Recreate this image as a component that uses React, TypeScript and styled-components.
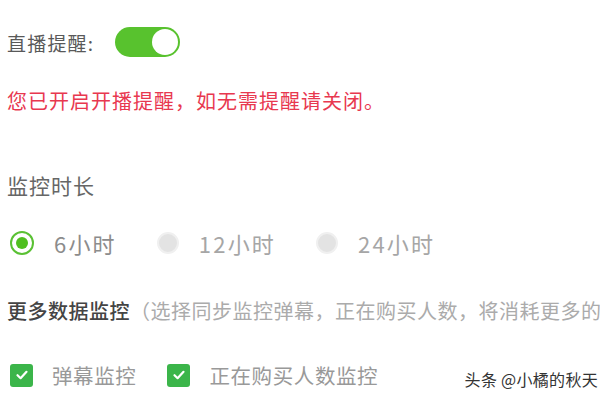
import React from 'react'
import styled, { createGlobalStyle } from 'styled-components'

const GlobalStyle = createGlobalStyle`
  html, body {
    margin: 0;
    padding: 0;
    background: #fff;
  }
  body {
    font-family: "Noto Sans CJK SC", "Noto Sans", sans-serif;
  }
`

const Page = styled.div`
  position: relative;
  width: 600px;
  height: 400px;
  overflow: hidden;
  padding-left: 7px;
  box-sizing: border-box;
  display: flex;
  flex-direction: column;
`

const Row = styled.div<{ $h: number; $mt?: number }>`
  display: flex;
  align-items: center;
  height: ${p => p.$h}px;
  margin-top: ${p => p.$mt || 0}px;
  white-space: nowrap;
`

const Text = styled.span<{ $color?: string; $weight?: number; $size?: number; $ls?: number }>`
  font-size: ${p => p.$size || 19}px;
  letter-spacing: ${p => (p.$ls ?? 1.2)}px;
  color: ${p => p.$color || '#595959'};
  font-weight: ${p => p.$weight || 400};
`

const Switch = styled.div`
  width: 65px;
  height: 30px;
  border-radius: 15px;
  background: #58c22e;
  margin-left: 21px;
  display: flex;
  align-items: center;
  justify-content: flex-end;
  padding: 0 2px;
  box-sizing: border-box;
`

const Knob = styled.div`
  width: 26px;
  height: 26px;
  border-radius: 50%;
  background: #fff;
`

const RadioGroup = styled.div`
  display: flex;
  align-items: center;
  gap: 40px;
  margin-left: 3px;
`

const RadioItem = styled.div`
  display: flex;
  align-items: center;
  gap: 20px;
`

const Radio = styled.span<{ $checked?: boolean }>`
  width: ${p => (p.$checked ? 24 : 22)}px;
  height: ${p => (p.$checked ? 24 : 22)}px;
  border-radius: 50%;
  box-sizing: border-box;
  display: flex;
  align-items: center;
  justify-content: center;
  border: 2px solid ${p => (p.$checked ? '#5ac134' : '#f0f0f0')};
  background: ${p => (p.$checked ? '#fff' : '#e3e3e3')};
  &::after {
    content: '';
    display: ${p => (p.$checked ? 'block' : 'none')};
    width: 12px;
    height: 12px;
    border-radius: 50%;
    background: #4fbf1f;
  }
`

const CheckGroup = styled.div`
  display: flex;
  align-items: center;
  gap: 31px;
  margin-left: 3px;
`

const CheckItem = styled.div`
  display: flex;
  align-items: center;
  gap: 19px;
`

const Checkbox = styled.span`
  width: 23px;
  height: 23px;
  border-radius: 3px;
  background: #3bb54a;
  display: flex;
  align-items: center;
  justify-content: center;
`

const Watermark = styled.div`
  position: absolute;
  right: 2px;
  bottom: 9px;
  font-size: 16px;
  letter-spacing: 0.3px;
  color: #333;
  font-family: "Noto Sans CJK SC", sans-serif;
  text-shadow: 0 0 2px #fff;
`

const Tick = () => (
  <svg width="14" height="14" viewBox="0 0 14 14">
    <path d="M2.5 7.2 L5.6 10.2 L11.5 3.8" fill="none" stroke="#fff" strokeWidth="2.2" strokeLinecap="round" strokeLinejoin="round" />
  </svg>
)

const options = ['6小时', '12小时', '24小时']
const checks = ['弹幕监控', '正在购买人数监控']

const App = (): JSX.Element => (
  <Page>
    <GlobalStyle />
    <Row $h={84}>
      <Text>直播提醒:</Text>
      <Switch>
        <Knob />
      </Switch>
    </Row>
    <Row $h={32}>
      <Text $color="#e8384f" $size={20} $ls={1}>您已开启开播提醒，如无需提醒请关闭。</Text>
    </Row>
    <Row $h={32} $mt={53}>
      <Text $color="#666" $size={21} $ls={1}>监控时长</Text>
    </Row>
    <Row $h={32} $mt={26}>
      <RadioGroup>
        {options.map((o, i) => (
          <RadioItem key={o}>
            <Radio $checked={i === 0} />
            <Text $color={i === 0 ? '#8c8c8c' : '#a6a6a6'} $size={22} $ls={2.2}>{o}</Text>
          </RadioItem>
        ))}
      </RadioGroup>
    </Row>
    <Row $h={32} $mt={35}>
      <Text $color="#444" $weight={500} $size={20} $ls={0.5}>更多数据监控</Text>
      <Text $color="#ababab" $size={20} $ls={0.5}>（选择同步监控弹幕，正在购买人数，将消耗更多的流量）</Text>
    </Row>
    <Row $h={32} $mt={33}>
      <CheckGroup>
        {checks.map(c => (
          <CheckItem key={c}>
            <Checkbox>
              <Tick />
            </Checkbox>
            <Text $color="#999" $size={20.5} $ls={0.6}>{c}</Text>
          </CheckItem>
        ))}
      </CheckGroup>
    </Row>
    <Watermark>头条 @小橘的秋天</Watermark>
  </Page>
)

export default App
